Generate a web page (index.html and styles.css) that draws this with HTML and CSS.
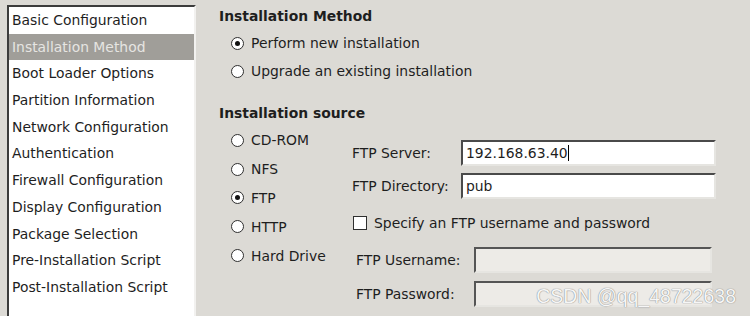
FILE: index.html
```html
<!DOCTYPE html>
<html>
<head>
<meta charset="utf-8">
<link rel="stylesheet" href="styles.css">
</head>
<body>
<div class="window">
  <ul class="nav">
    <li>Basic Configuration</li>
    <li class="selected">Installation Method</li>
    <li>Boot Loader Options</li>
    <li>Partition Information</li>
    <li>Network Configuration</li>
    <li>Authentication</li>
    <li>Firewall Configuration</li>
    <li>Display Configuration</li>
    <li>Package Selection</li>
    <li>Pre-Installation Script</li>
    <li>Post-Installation Script</li>
  </ul>
  <div class="panel">
    <h2 class="heading">Installation Method</h2>
    <div class="method">
      <label class="radio-row"><span class="radio checked"></span>Perform new installation</label>
      <label class="radio-row"><span class="radio"></span>Upgrade an existing installation</label>
    </div>
    <h2 class="heading heading-source">Installation source</h2>
    <div class="source">
      <div class="source-list">
        <label class="radio-row src"><span class="radio"></span>CD-ROM</label>
        <label class="radio-row src"><span class="radio"></span>NFS</label>
        <label class="radio-row src"><span class="radio checked"></span>FTP</label>
        <label class="radio-row src"><span class="radio"></span>HTTP</label>
        <label class="radio-row src"><span class="radio"></span>Hard Drive</label>
      </div>
      <div class="ftp">
        <div class="field">
          <span class="field-label">FTP Server:</span>
          <span class="entry">192.168.63.40<span class="caret"></span></span>
        </div>
        <div class="field field-dir">
          <span class="field-label">FTP Directory:</span>
          <span class="entry">pub</span>
        </div>
        <label class="check-row"><span class="checkbox"></span>Specify an FTP username and password</label>
        <div class="field field-user">
          <span class="field-label wide">FTP Username:</span>
          <span class="entry disabled small"></span>
        </div>
        <div class="field field-pass">
          <span class="field-label wide">FTP Password:</span>
          <span class="entry disabled small"></span>
        </div>
      </div>
    </div>
  </div>
  <div class="watermark">CSDN @qq_48722638</div>
</div>
</body>
</html>
```

FILE: styles.css
```css
html, body {
  margin: 0;
  padding: 0;
  height: 100%;
  overflow: hidden;
}

body {
  background: #dcdad5;
  font-family: "DejaVu Sans", sans-serif;
  font-size: 13.9px;
  color: #1e1e1e;
}

.window {
  position: relative;
  display: flex;
  height: 316px;
  overflow: hidden;
}

.nav {
  list-style: none;
  margin: 5px 0 0 7px;
  padding: 0;
  width: 185px;
  height: 309px;
  background: #ffffff;
  border-top: 2px solid #3c3c3c;
  border-left: 2px solid #3c3c3c;
  border-right: 2px solid #f2f1ef;
  flex: none;
}

.nav li {
  height: 26.7px;
  line-height: 26.7px;
  padding-left: 3px;
  white-space: nowrap;
}

.nav li.selected {
  background: #a09e99;
  color: #e6e5e2;
}

.panel {
  margin-left: 23px;
  flex: 1;
}

.heading {
  margin: 6px 0 0 0;
  font-size: 13.9px;
  font-weight: bold;
  line-height: 20px;
  height: 20px;
}

.heading-source {
  margin-top: 18px;
}

.method {
  margin-top: 3px;
  padding-left: 12px;
}

.radio-row {
  display: flex;
  align-items: center;
  height: 28px;
  white-space: nowrap;
}

.radio {
  width: 11px;
  height: 11px;
  border: 1px solid #2f2f2f;
  border-radius: 50%;
  background: #ffffff;
  margin-right: 7px;
  position: relative;
  flex: none;
}

.radio.checked::after {
  content: "";
  position: absolute;
  left: 3px;
  top: 3px;
  width: 5px;
  height: 5px;
  border-radius: 50%;
  background: #111;
}

.source {
  display: flex;
  margin-top: 3px;
}

.source-list {
  width: 121px;
  padding-left: 12px;
  flex: none;
}

.radio-row.src {
  height: 28.8px;
}

.ftp {
  padding-top: 14px;
  flex: 1;
}

.field {
  display: flex;
  align-items: center;
  height: 26px;
}

.field-dir {
  margin-top: 7px;
}

.field-label {
  width: 109px;
  flex: none;
  white-space: nowrap;
}

.field-label.wide {
  width: 118px;
  padding-left: 4px;
}

.entry {
  box-sizing: border-box;
  width: 255px;
  height: 26px;
  line-height: 22px;
  padding-left: 3px;
  background: #ffffff;
  border-top: 2px solid #4a4a4a;
  border-left: 2px solid #4a4a4a;
  border-right: 2px solid #e6e5e1;
  border-bottom: 2px solid #e6e5e1;
  white-space: nowrap;
  display: flex;
  align-items: center;
}

.entry.small {
  width: 238px;
}

.entry.disabled {
  background: #edebe7;
  border-top-color: #555;
  border-left-color: #555;
}

.caret {
  display: inline-block;
  width: 1px;
  height: 16px;
  background: #000;
}

.check-row {
  display: flex;
  align-items: center;
  height: 26px;
  margin-top: 11px;
  padding-left: 1px;
  white-space: nowrap;
}

.checkbox {
  width: 12px;
  height: 12px;
  border: 1px solid #2f2f2f;
  background: #ffffff;
  margin-right: 7px;
  flex: none;
}

.field-user {
  margin-top: 11px;
}

.field-pass {
  margin-top: 8px;
}

.watermark {
  position: absolute;
  right: 14px;
  top: 285px;
  font-family: "Liberation Sans", Arial, sans-serif;
  font-size: 19.5px;
  color: #f6f6f6;
  text-shadow: 0 0 1px #8a8a8a, 0 0 1px #8a8a8a;
  white-space: nowrap;
}
```
